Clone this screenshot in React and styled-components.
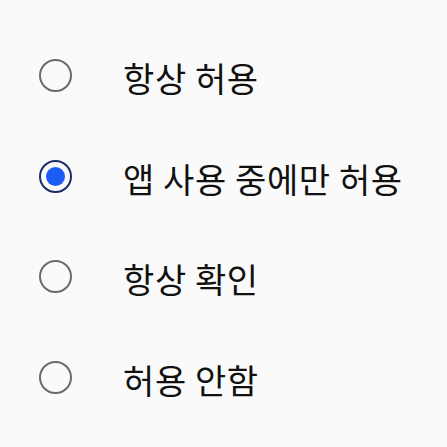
import React from 'react';
import styled, { createGlobalStyle } from 'styled-components';

const GlobalStyle = createGlobalStyle`
  html, body {
    margin: 0;
    padding: 0;
    background: #fafafa;
  }
  body {
    font-family: "Noto Sans CJK KR", "Noto Sans", sans-serif;
  }
`;

const options = ['항상 허용', '앱 사용 중에만 허용', '항상 확인', '허용 안함'];

const App = () => (
  <>
    <GlobalStyle />
    <List>
      {options.map((label, i) => (
        <Row key={label}>
          <Radio $checked={i === 1}>{i === 1 && <Dot />}</Radio>
          <Label>{label}</Label>
        </Row>
      ))}
    </List>
  </>
);

const List = styled.div`
  width: 447px;
  height: 447px;
  box-sizing: border-box;
  padding-top: 25px;
  background: #fafafa;
  display: flex;
  flex-direction: column;
`;

const Row = styled.div`
  height: 100.7px;
  display: flex;
  align-items: center;
  padding-left: 39px;
  gap: 51px;
  box-sizing: border-box;
`;

const Radio = styled.span`
  width: 33px;
  height: 33px;
  box-sizing: border-box;
  border-radius: 50%;
  border: ${(p) => (p.$checked ? '2px solid #1c2d66' : '2px solid #6b6b6b')};
  display: flex;
  align-items: center;
  justify-content: center;
  flex-shrink: 0;
`;

const Dot = styled.span`
  width: 19px;
  height: 19px;
  border-radius: 50%;
  background: #1b5cf4;
`;

const Label = styled.span`
  font-size: 34px;
  letter-spacing: 0.6px;
  color: #111;
  line-height: 1;
  margin-top: 5px;
  white-space: nowrap;
`;

export default App;
